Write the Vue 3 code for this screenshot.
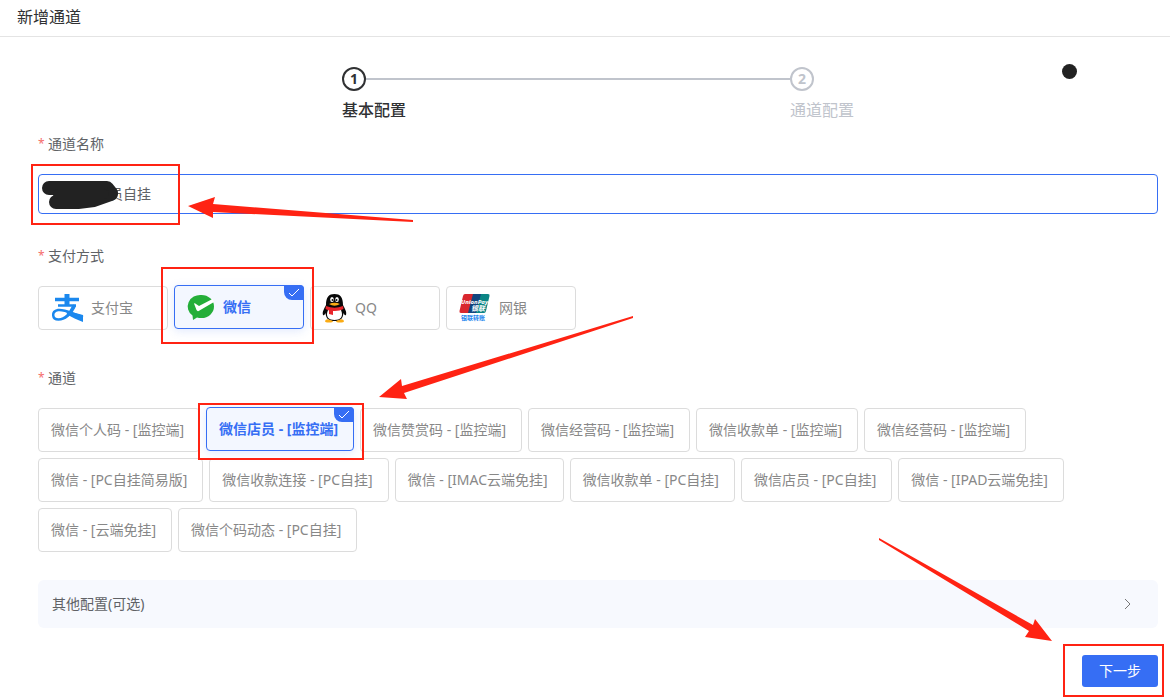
<script setup>
import { ref } from 'vue'

const steps = ['基本配置', '通道配置']
const currentStep = ref(0)

const name = ref('员自挂')

const payTypes = [
  { key: 'alipay', label: '支付宝' },
  { key: 'wechat', label: '微信' },
  { key: 'qq', label: 'QQ' },
  { key: 'union', label: '网银' }
]
const payType = ref('wechat')

const channels = [
  '微信个人码 - [监控端]',
  '微信店员 - [监控端]',
  '微信赞赏码 - [监控端]',
  '微信经营码 - [监控端]',
  '微信收款单 - [监控端]',
  '微信经营码 - [监控端]',
  '微信 - [PC自挂简易版]',
  '微信收款连接 - [PC自挂]',
  '微信 - [IMAC云端免挂]',
  '微信收款单 - [PC自挂]',
  '微信店员 - [PC自挂]',
  '微信 - [IPAD云端免挂]',
  '微信 - [云端免挂]',
  '微信个码动态 - [PC自挂]'
]
const channel = ref(1)
</script>

<template>
  <div class="page">
    <header class="header">
      <h1>新增通道</h1>
    </header>

    <main class="content">
      <ol class="steps">
        <li v-for="(step, index) in steps" :key="step" :class="['step', { active: index === currentStep }]">
          <div class="step-head">
            <span class="step-num">{{ index + 1 }}</span>
          </div>
          <div class="step-title">{{ step }}</div>
        </li>
      </ol>

      <form @submit.prevent>
        <div class="form-item">
          <label class="label" for="channel-name"><span class="star">*</span>通道名称</label>
          <input id="channel-name" v-model="name" class="text-input" type="text" />
        </div>

        <fieldset class="form-item">
          <legend class="label"><span class="star">*</span>支付方式</legend>
          <div class="options">
            <label
              v-for="item in payTypes"
              :key="item.key"
              :class="['option', 'pay', { checked: payType === item.key }]"
            >
              <input v-model="payType" type="radio" name="pay" :value="item.key" />
              <svg v-if="item.key === 'alipay'" class="logo" width="32" height="30" viewBox="0 0 32 30">
                <g fill="none" stroke="#1b88ee">
                  <path d="M16 1v11" stroke-width="5" />
                  <path d="M4 6.500h24" stroke-width="3.500" />
                  <path d="M7 12.500h18" stroke-width="2.500" />
                  <path d="M23.500 12C20 20 14 26.500 7.500 26.500C1 26.500 0 18.500 7 17C14 16 20 20.500 32 24" stroke-width="2.500" />
                </g>
                <path d="M25 13C23 18 19 24 13 26.500L16 22L21 13Z" fill="#1b88ee" />
                <path d="M15 17.500L32 22V29C26 26.500 21 24.500 16 21Z" fill="#1b88ee" />
              </svg>
              <svg v-else-if="item.key === 'wechat'" class="logo" width="28" height="28" viewBox="0 0 28 28">
                <path d="M14.500 2A12.500 11.500 0 0 1 14.500 25Q12 25 10 24.500L6 27L5.500 22.500A12.500 11.500 0 0 1 14.500 2Z" fill="#24ae39" />
                <path d="M7 10.500Q8 10 9 11L12 13L25.500 6Q26.500 7.500 27 9L12.500 17.500Q10.500 19 9.500 17Z" fill="#fff" />
              </svg>
              <svg v-else-if="item.key === 'qq'" class="logo" width="24" height="30" viewBox="0 0 24 30">
                <path d="M3 12C3 4 6 1 11.500 1S20 4 20 12C22 16 24 19 23 22C22 23 21 21 20.500 20C20 26 17 28 11.500 28S3 26 2.500 20C2 21 1 23 0 22C-1 19 1 16 3 12Z" fill="#080808" />
                <path d="M5 17H18C21 24 17 27 11.500 27S2 24 5 17Z" fill="#fff" />
                <path d="M2 28Q3 25.500 6 26.500L10 28Q10 29.500 6 29.500T2 28Z" fill="#faab14" />
                <path d="M21 28Q20 25.500 17 26.500L13 28Q13 29.500 17 29.500T21 28Z" fill="#faab14" />
                <ellipse cx="9" cy="6.500" rx="1.800" ry="2.500" fill="#fff" />
                <ellipse cx="14" cy="6.500" rx="1.800" ry="2.500" fill="#fff" />
                <circle cx="9.500" cy="7" r="1" fill="#111" />
                <circle cx="13.500" cy="7" r="1" fill="#111" />
                <path d="M6 11Q11.500 8.500 17 11Q11.500 14.500 6 11Z" fill="#faab14" />
                <path d="M3 13Q11.500 16.500 20 13L20.500 16Q16 18.500 10 18V22L6 21V17.500L2.500 16Z" fill="#e8252b" />
              </svg>
              <svg v-else class="logo" width="32" height="30" viewBox="0 0 32 30">
                <path d="M6 1H17L12 20H2Q0 20 .5 18L4 3Q4.500 1 6 1Z" fill="#d9272e" />
                <path d="M14 1H24L19 20H9Z" fill="#12457e" />
                <path d="M22 1H29Q31 1 30.500 3L27 18Q26.500 20 25 20H17Z" fill="#0b8585" />
                <text class="union-en" x="2" y="11">UnionPay</text>
                <text class="union-cn" x="12" y="18">银联</text>
                <text class="union-sub" x="2" y="27">银联转账</text>
              </svg>
              <span>{{ item.label }}</span>
              <span v-if="payType === item.key" class="corner">
                <svg width="12" height="10" viewBox="0 0 12 10"><path d="M1 5L4 8L11 1" /></svg>
              </span>
            </label>
          </div>
        </fieldset>

        <fieldset class="form-item">
          <legend class="label"><span class="star">*</span>通道</legend>
          <div class="options">
            <label
              v-for="(item, index) in channels"
              :key="index"
              :class="['option', { checked: channel === index }]"
            >
              <input v-model="channel" type="radio" name="channel" :value="index" />
              <span>{{ item }}</span>
              <span v-if="channel === index" class="corner">
                <svg width="12" height="10" viewBox="0 0 12 10"><path d="M1 5L4 8L11 1" /></svg>
              </span>
            </label>
          </div>
        </fieldset>

        <button class="collapse" type="button">
          <span>其他配置(可选)</span>
          <svg width="8" height="12" viewBox="0 0 8 12"><path d="M1 1L6 6L1 11" /></svg>
        </button>

        <div class="footer">
          <button class="next-btn" type="submit">下一步</button>
        </div>
      </form>
    </main>

    <!-- hand-drawn marks over the form -->
    <svg class="marks" width="1170" height="697" viewBox="0 0 1170 697">
      <g class="ink">
        <path d="M49 188H107L111 193" stroke-width="14" />
        <path d="M56 202H78L94 200L111 194" stroke-width="14" />
        <path d="M58 194H104" stroke-width="10" />
      </g>
      <circle cx="1069.500" cy="71.500" r="7.500" fill="#222" />
      <g class="frames">
        <rect x="32" y="165" width="147" height="59" />
        <rect x="162" y="268" width="151" height="75" />
        <rect x="199" y="404" width="164" height="55" />
        <rect x="1064" y="645" width="99" height="51" />
      </g>
      <g class="arrows">
        <path d="M188 206L215 197L213 204L413 220V222L213 212V218Z" />
        <path d="M379 397L401 379L402 386L633 316V318L404 393L407 399Z" />
        <path d="M1052 641L1035 619L1033 625L879 538V540L1029 631L1025 637Z" />
      </g>
    </svg>
  </div>
</template>

<style>
body {
  margin: 0;
  background: #fff;
}
</style>

<style scoped>
.page {
  position: relative;
  font-family: "Noto Sans", "Noto Sans CJK SC", sans-serif;
  font-size: 14px;
  line-height: 20px;
  color: #606266;
}

.header {
  padding: 5px 17px 7px;
  border-bottom: 1px solid #e4e4e4;
}

.header h1 {
  margin: 0;
  font-size: 16px;
  font-weight: 400;
  line-height: 24px;
  color: #303133;
}

.content {
  padding: 30px 12px 10px 38px;
}

.steps {
  display: flex;
  justify-content: center;
  margin: 0 0 4px;
  padding: 0;
  list-style: none;
  color: #c0c4cc;
}

.step:not(:last-child) {
  flex: 0 0 40%;
}

.step-head {
  display: flex;
  align-items: center;
}

.step:not(:last-child) .step-head::after {
  content: "";
  flex: 1;
  height: 2px;
  background: #c0c4cc;
}

.step-num {
  width: 24px;
  height: 24px;
  box-sizing: border-box;
  border: 2px solid currentColor;
  border-radius: 50%;
  font-weight: 700;
  text-align: center;
}

.step-title {
  font-size: 16px;
  line-height: 39px;
}

.step.active .step-num {
  color: #303133;
}

.step.active .step-title {
  color: #303133;
  font-weight: 500;
}

.form-item {
  margin: 0 0 32px;
  padding: 0;
  border: none;
  min-width: 0;
}

.label {
  display: flex;
  padding: 0;
  margin-bottom: 20px;
}

.star {
  width: 10px;
  font-size: 12px;
  color: #f56c6c;
}

.text-input {
  display: block;
  width: 100%;
  height: 40px;
  box-sizing: border-box;
  padding: 0 15px 2px 70px;
  border: 1px solid #366ef4;
  border-radius: 4px;
  outline: none;
  background: transparent;
  font: inherit;
  color: #606266;
}

.options {
  display: flex;
  flex-wrap: wrap;
  gap: 6px;
  padding-bottom: 6px;
}

.option {
  position: relative;
  display: flex;
  align-items: center;
  height: 44px;
  box-sizing: border-box;
  padding: 0 15px 0 12px;
  border: 1px solid #dcdcdc;
  border-radius: 4px;
  color: #888;
  cursor: pointer;
}

.option input {
  position: absolute;
  opacity: 0;
  margin: 0;
  pointer-events: none;
}

.option.pay {
  width: 130px;
}

.option.checked {
  border-color: #366ef4;
  background: #f3f7ff;
  color: #366ef4;
  font-weight: 700;
  box-shadow: 0 2px 10px rgba(54, 110, 244, 0.15);
  transform: translateY(-1px);
}

.logo {
  flex: none;
  margin-right: 8px;
  overflow: visible;
}

.union-en,
.union-cn,
.union-sub {
  font-weight: 700;
  font-style: italic;
  fill: #fff;
}

.union-en {
  font-size: 6px;
}

.union-cn {
  font-size: 7px;
}

.union-sub {
  font-size: 6px;
  font-style: normal;
  fill: #2385ee;
}

.corner {
  position: absolute;
  top: -1px;
  right: -1px;
  display: flex;
  align-items: center;
  justify-content: center;
  width: 20px;
  height: 15px;
  border-radius: 0 4px 0 8px;
  background: #366ef4;
}

.corner path {
  fill: none;
  stroke: #fff;
}

.collapse {
  display: flex;
  align-items: center;
  justify-content: space-between;
  width: 100%;
  height: 48px;
  margin-top: -10px;
  padding: 0 26px 0 14px;
  border: none;
  border-radius: 6px;
  background: #f7f9fe;
  font: inherit;
  color: #606266;
}

.collapse path {
  fill: none;
  stroke: #777;
}

.footer {
  display: flex;
  justify-content: flex-end;
  padding-top: 27px;
}

.next-btn {
  width: 76px;
  height: 32px;
  padding: 0;
  border: none;
  border-radius: 3px;
  background: #366ef4;
  font: inherit;
  color: #fff;
  cursor: pointer;
}

.marks {
  position: absolute;
  top: 0;
  left: 0;
  pointer-events: none;
}

.ink {
  fill: none;
  stroke: #222;
  stroke-linecap: round;
  stroke-linejoin: round;
}

.frames {
  fill: none;
  stroke: #ff2313;
  stroke-width: 2;
}

.arrows {
  fill: #ff2313;
}
</style>
